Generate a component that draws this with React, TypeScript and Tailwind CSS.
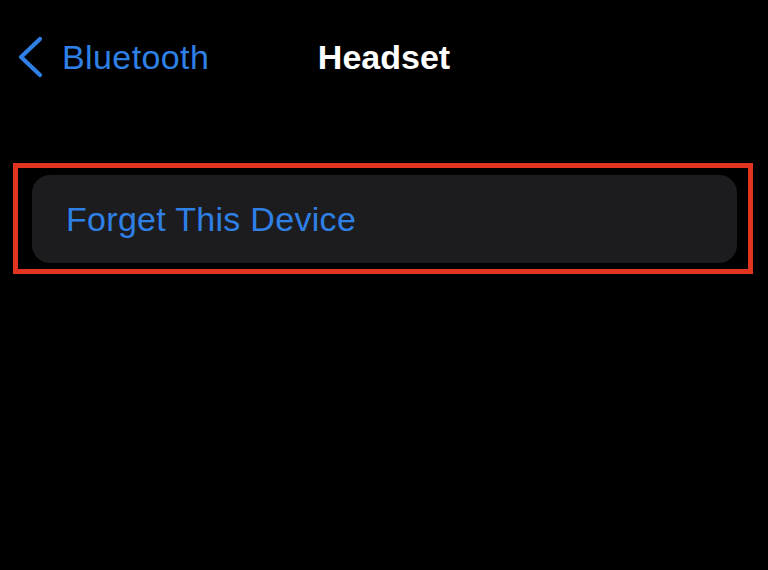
import React from "react";

export default function App() {
  return (
    <div
      className="w-[768px] h-[570px] bg-black overflow-hidden"
      style={{ fontFamily: '"Liberation Sans", Arial, sans-serif' }}
    >
      <div className="pt-[17px] h-[97px] grid grid-cols-[1fr_auto_1fr] items-center">
        <div className="flex items-center pl-[17px] text-[#2f80e6]">
          <svg width="26" height="42" viewBox="0 0 26 42" className="shrink-0">
            <polyline
              points="23,3 4,21 23,39"
              fill="none"
              stroke="#2f80e6"
              strokeWidth="4.2"
              strokeLinecap="round"
              strokeLinejoin="round"
            />
          </svg>
          <span className="ml-[19px] text-[34px] leading-none tracking-[0.4px]">Bluetooth</span>
        </div>
        <div className="text-white text-[34px] font-semibold leading-none">Headset</div>
        <div />
      </div>
      <div className="mt-[66px] mx-[13px] w-[740px] border-[5px] border-[#e3341f] pl-[14px] pr-[11px] pt-[7px] pb-[6px]">
        <div className="h-[88px] rounded-[18px] bg-[#1c1c1e] flex items-center pl-[34px]">
          <span className="text-[#2f80e6] text-[34px] leading-none tracking-[0.3px]">Forget This Device</span>
        </div>
      </div>
    </div>
  );
}
